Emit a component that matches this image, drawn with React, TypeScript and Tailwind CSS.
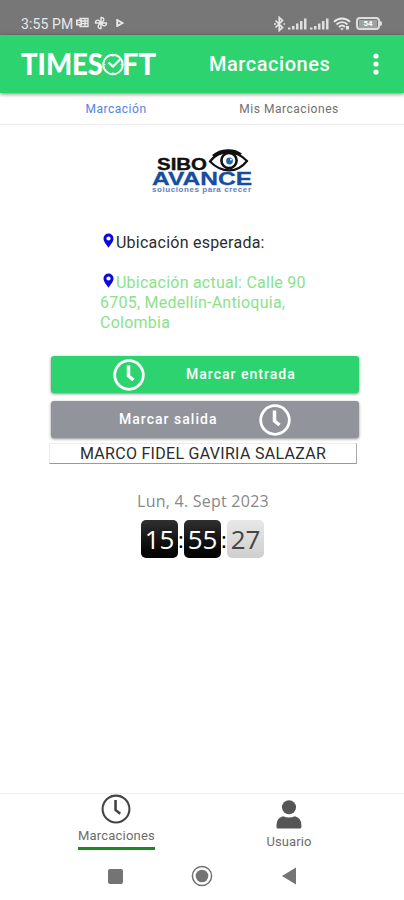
import { useState } from "react";

function Clock({ className, weight = 2.2 }: { className: string; weight?: number }) {
    return (
        <svg className={className} viewBox="0 0 32 32" fill="none" stroke="currentColor">
            <circle cx="16" cy="16" r="14.3" strokeWidth={weight} />
            <path d="M15.5 6.5V17l5 4" strokeWidth={weight * 1.25} />
        </svg>
    );
}

function Pin() {
    return (
        <svg className="inline-block w-[11px] h-[16px] ml-[3px] mr-[2px] align-[-1px]" viewBox="0 0 11 16" fill="#0808e0">
            <path fillRule="evenodd" d="M5.5 0.5A5 5 0 0 0 .5 5.5C.5 9 4 12 5.5 14.8 7 12 10.500 9 10.500 5.500A5 5 0 0 0 5.500 .5ZM5.500 3.400A2.100 2.100 0 1 1 5.500 7.600A2.100 2.100 0 1 1 5.500 3.400Z" />
        </svg>
    );
}

function Signal() {
    return (
        <svg className="w-[19px] h-[12px]" viewBox="0 0 19 12" fill="#dedede">
            <rect x="0" y="9.500" width="2.500" height="2" />
            <rect x="4" y="8" width="2.500" height="3.500" />
            <rect x="8" y="5.500" width="2.500" height="6" />
            <rect x="12" y="3" width="2.500" height="8.500" />
            <rect x="16" y="0.500" width="2.500" height="11" />
        </svg>
    );
}

function StatusBar() {
    return (
        <div className="h-[35px] bg-[#777777] flex items-start pt-[15px] pl-[21px] pr-[22px] text-[#e8e8e8]">
            <span className="w-[55px] text-[14px] leading-[18px] whitespace-nowrap tracking-[0.1px]">3:55 PM</span>
            <svg className="w-[13px] h-[12px] mt-[2px]" viewBox="0 0 13 12" fill="none" stroke="currentColor">
                <path d="M4 1.500h8v8H4zM6 4h6M6 6.500h6M9 2v7" strokeWidth="1.300" />
                <rect x=".5" y="3" width="5" height="5" fill="currentColor" />
                <path d="M2 4.500h2v2H2z" stroke="#777777" strokeWidth=".8" />
            </svg>
            <svg className="w-[14px] h-[14px] mt-[1px] ml-[5px]" viewBox="0 0 14 14" fill="none" stroke="currentColor" strokeWidth="1.400">
                <path d="M7 7V1.500C10 1 10.500 4 9 5.500L7 7h5.500c.5 3-2.500 3.500-4 2L7 7v5.500C4 13 3.500 10 5 8.500L7 7H1.500C1 4 4 3.500 5.500 5z" />
            </svg>
            <svg className="w-[8px] h-[8px] mt-[4px] ml-[8px]" viewBox="0 0 8 8" fill="none" stroke="currentColor" strokeWidth="1.900">
                <path d="M1.200 1l5.300 3-5.300 3z" />
            </svg>
            <div className="ml-auto flex items-center h-[17px]">
                <svg className="w-[11px] h-[16px] mr-[3px]" viewBox="0 0 11 16" fill="none" stroke="currentColor" strokeWidth="1.700">
                    <path d="M1.500 4.500l7 7L5.300 14.500v-13l3.200 3-7 7" />
                    <path d="M0 8h2M9.500 8h1.500" />
                </svg>
                <Signal />
                <span className="w-[3px]" />
                <Signal />
                <svg className="w-[18px] h-[14px] ml-[4px]" viewBox="0 0 18 14" fill="none" stroke="currentColor" strokeWidth="1.900">
                    <path d="M1 4.800c4.500-4.500 11.500-4.500 16 0M3.500 7.500c3.200-3.200 7.800-3.200 11 0M6 10c2-2 4-2 6 0" />
                    <path d="M7.200 11.300h3.600L9 13.500zM13 9h3v3.500h-3z" fill="currentColor" stroke="none" />
                </svg>
                <div className="ml-[5px] w-[24px] h-[13px] rounded-[4px] border-2 border-[#dddddd] flex items-center justify-center p-px">
                    <span className="w-full bg-[#a0a0a0] rounded-[1px] text-[8px] leading-[8px] font-bold text-white text-center">54</span>
                </div>
                <span className="w-[2px] h-[5px] bg-[#dddddd] rounded-r" />
            </div>
        </div>
    );
}

function Header() {
    return (
        <header className="relative z-10 h-[58px] bg-[#2dd36f] flex items-center pl-[21px] pr-[25px] shadow-[0_1px_4px_rgba(0,0,0,0.5)]">
            <svg className="w-[136px] h-[44px]" viewBox="0 -9 136 44" fill="#fff" fontFamily="Lato, sans-serif" fontWeight="900" fontSize="29.500">
                <text x="0" y="24" textLength="82" lengthAdjust="spacingAndGlyphs">TIMES</text>
                <text x="101" y="24" textLength="34" lengthAdjust="spacingAndGlyphs">FT</text>
                <g fill="none" stroke="#fff">
                    <circle cx="92" cy="13.500" r="9.700" strokeWidth="1.900" />
                    <path d="M87.500 11.500l4.500 4 7.500-7.500" strokeWidth="2.300" />
                    <path d="M92 4v2M92 21v2M82.500 13.500h2M99.500 13.500h2" strokeWidth=".8" />
                </g>
            </svg>
            <h1 className="ml-[52px] text-[20px] font-medium text-white tracking-[0.540px]">Marcaciones</h1>
            <svg className="ml-auto w-[6px] h-[22px]" viewBox="0 0 6 22" fill="#fff">
                <circle cx="3" cy="3" r="2.600" />
                <circle cx="3" cy="11" r="2.600" />
                <circle cx="3" cy="19" r="2.600" />
            </svg>
        </header>
    );
}

function CompanyLogo() {
    return (
        <svg className="mx-auto mt-[23px] w-[104px] h-[48px]" viewBox="0 0 104 48" fontFamily="'Liberation Sans', sans-serif" fontWeight="700">
            <text x="7" y="22" fontSize="16" fill="#111" stroke="#111" strokeWidth=".4" textLength="50" lengthAdjust="spacingAndGlyphs">SIBO</text>
            <g fill="none" stroke="#111">
                <path d="M60 13.500C69 1.500 86 1.500 97 13C87 25.500 72 25.500 60 13.500Z" strokeWidth="2.200" />
                <path d="M63 8C71 1 84 1 91 6.500" strokeWidth="2.800" />
                <circle cx="79" cy="12.500" r="7.600" strokeWidth="2.600" />
            </g>
            <circle cx="79.500" cy="13" r="3.400" fill="#2465ab" />
            <circle cx="81" cy="11.500" r="1" fill="#fff" />
            <text x="2" y="37" fontSize="18.500" fill="#174da0" stroke="#174da0" strokeWidth=".3" textLength="100" lengthAdjust="spacingAndGlyphs">AVANCE</text>
            <text x="2" y="44" fontSize="8" fill="#6680bd" textLength="99">soluciones para crecer</text>
        </svg>
    );
}

function Tile({ value, light = false }: { value: string; light?: boolean }) {
    return (
        <span
            className={
                "w-[37px] h-[38px] rounded-[5px] flex items-center justify-center text-[26px] leading-none " +
                (light
                    ? "bg-linear-to-b from-[#e8e8e8] to-[#cfcfcf] text-[#444]"
                    : "bg-linear-to-b from-[#303030] to-[#020202] text-white")
            }
        >
            {value}
        </span>
    );
}

export default function App() {
    const [tab, setTab] = useState("marcacion");

    return (
        <div className="w-[404px] h-[900px] mx-auto bg-white overflow-hidden flex flex-col font-['Roboto',sans-serif]">
            <StatusBar />
            <Header />

            <nav className="h-[32px] shrink-0 border-b border-[#ececec] grid grid-cols-[232px_1fr] text-[12px] leading-[30px] tracking-[0.530px]">
                <button onClick={() => setTab("marcacion")} className={tab === "marcacion" ? "text-[#5284e4]" : "text-[#717171]"}>
                    Marcación
                </button>
                <button onClick={() => setTab("mis")} className={"pr-[58px] " + (tab === "mis" ? "text-[#5284e4]" : "text-[#717171]")}>
                    Mis Marcaciones
                </button>
            </nav>

            <main className="flex-1 flex flex-col">
                <CompanyLogo />

                <div className="mt-[37px] ml-[100px] w-[230px] text-[16px] leading-[20px] tracking-[0.240px]">
                    <p className="text-[#2c2c2c]"><Pin />Ubicación esperada:</p>
                    <p className="mt-[20px] text-[#8be28b]">
                        <Pin />Ubicación actual: Calle 90
                        <br />
                        6705, Medellín-Antioquia,
                        <br />
                        Colombia
                    </p>
                </div>

                <div className="mt-[23px] ml-[51px] w-[308px] flex flex-col gap-[8px] text-[14px] font-medium tracking-[1.020px] text-white">
                    <button className="h-[37px] rounded-[3px] bg-[#2dd36f] shadow-[0_1px_3px_rgba(0,0,0,0.45)] flex items-center pl-[62px]">
                        <Clock className="w-[32px] h-[32px]" weight={2.8} />
                        <span className="ml-[41px] -mt-px">Marcar entrada</span>
                    </button>
                    <button className="h-[37px] rounded-[3px] bg-[#92949c] shadow-[0_1px_3px_rgba(0,0,0,0.45)] flex items-center pl-[68px]">
                        <span className="w-[140px] text-left">Marcar salida</span>
                        <Clock className="w-[32px] h-[32px]" weight={2.8} />
                    </button>
                </div>
                <div className="mt-[5px] ml-[49px] w-[308px] h-[21px] border border-[#ececec] border-r-[#aaa] border-b-[#999] text-center text-[16px] leading-[20px] tracking-[0.290px] text-[#2c2c2c]">
                    MARCO FIDEL GAVIRIA SALAZAR
                </div>

                <div className="mt-[26px] pl-[2px] text-center text-[16px] leading-[22px] tracking-[0.240px] text-[#888] font-['Open_Sans',sans-serif]">
                    Lun, 4. Sept 2023
                </div>
                <div className="mt-[8px] pl-[141px] flex items-center font-['Open_Sans',sans-serif]">
                    <Tile value="15" />
                    <span className="w-[6px] text-center text-[22px] leading-none">:</span>
                    <Tile value="55" />
                    <span className="w-[6px] text-center text-[22px] leading-none">:</span>
                    <Tile value="27" light />
                </div>
            </main>

            <footer className="h-[107px] shrink-0 border-t border-[#eeeeee] text-[#6c6c6c]">
                <div className="h-[60px] flex text-[13px] leading-[16px]">
                    <div className="ml-[78px] w-[77px] flex flex-col items-center">
                        <Clock className="w-[30px] h-[30px] -ml-[2px] text-[#444]" />
                        <span className="mt-[4px] tracking-[0.200px]">Marcaciones</span>
                        <span className="mt-[3px] w-full h-[3px] bg-[#168c21]" />
                    </div>
                    <div className="ml-[100px] w-[68px] pt-[6px] flex flex-col items-center">
                        <svg className="w-[26px] h-[29px]" viewBox="0 0 26 29" fill="#555">
                            <circle cx="13" cy="7.200" r="7" />
                            <path d="M7 16.200q6 2.800 12 0 6.400 1.600 6.400 9.300V27q0 1.500-1.500 1.500H2Q.5 28.500.5 27v-1.500Q.5 17.800 7 16.200z" />
                        </svg>
                        <span className="mt-[5px] tracking-[0.100px]">Usuario</span>
                    </div>
                </div>
                <div className="h-[46px] flex items-center pl-[108px] pb-[2px]">
                    <span className="w-[15px] h-[15px] rounded-[2px] bg-[#747474]" />
                    <svg className="ml-[68px] w-[22px] h-[22px]" viewBox="0 0 22 22" fill="none" stroke="#747474">
                        <circle cx="11" cy="11" r="9.600" strokeWidth="1.500" />
                        <circle cx="11" cy="11" r="6.300" fill="#747474" stroke="none" />
                    </svg>
                    <svg className="ml-[69px] w-[14px] h-[18px]" viewBox="0 0 14 18" fill="#747474">
                        <path d="M0 9L14 .5v17z" />
                    </svg>
                </div>
            </footer>
        </div>
    );
}
